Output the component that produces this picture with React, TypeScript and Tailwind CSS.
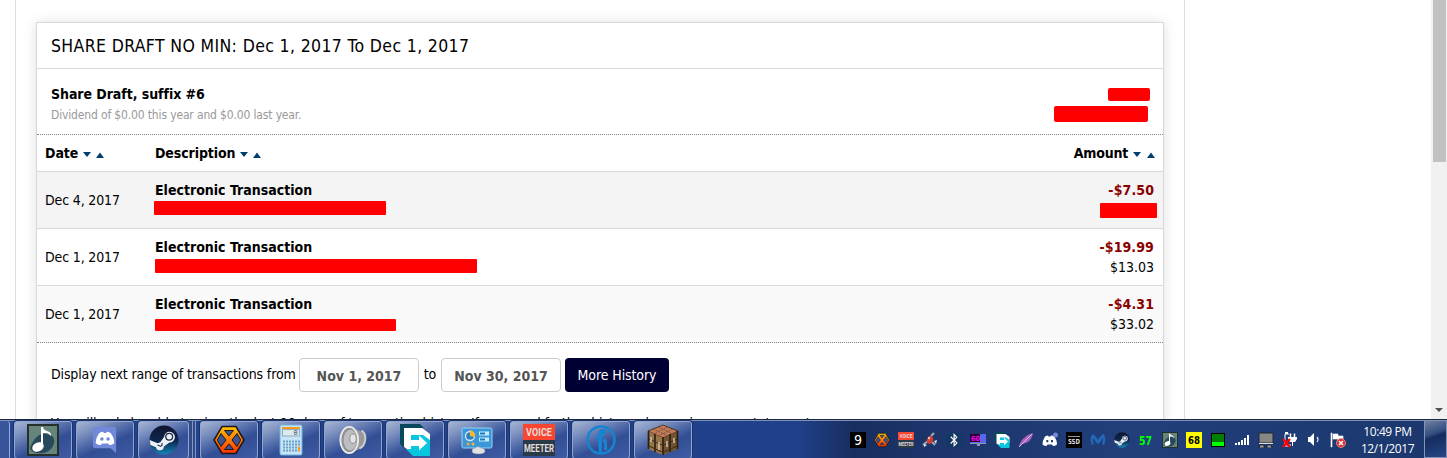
import type { ReactNode } from "react"
import { FaBluetoothB } from "react-icons/fa"

const rows = [
    { date: "Dec 4, 2017", amount: "-$7.50", balance: "", bg: "bg-[#f4f4f4]", bar: "w-[232px] h-[14px] -ml-px mt-px" },
    { date: "Dec 1, 2017", amount: "-$19.99", balance: "$13.03", bg: "bg-white", bar: "w-[322px] h-[14px] mt-[2px]" },
    { date: "Dec 1, 2017", amount: "-$4.31", balance: "$33.02", bg: "bg-[#f9f9f9]", bar: "w-[241px] h-[12px] mt-[5px]" },
]

function SortArrows({ wide }: { wide?: boolean }) {
    return (
        <svg width={wide ? 22 : 21} height="8" viewBox={wide ? "0 0 22 8" : "0 0 21 8"} className="ml-[5px] mt-[3px]">
            <path d="M0 1h8L4 6z" fill="#00406f" />
            <path d={wide ? "M14 7h8l-4-5.5z" : "M13 7h8l-4-5.5z"} fill="#00406f" />
        </svg>
    )
}

function TaskButton({ children }: { children: ReactNode }) {
    return (
        <div className="w-[58px] h-[38px] shrink-0 rounded-[3px] border border-[#93a5cc] shadow-[0_0_0_1px_#1b3472] bg-[linear-gradient(155deg,#a6b5d3_0%,#7f93c1_22%,#4c66a6_46%,#324f96_60%,#3e5ba3_100%)] flex items-center justify-center">
            {children}
        </div>
    )
}

function MusicIcon({ size }: { size: number }) {
    return (
        <svg width={size} height={size} viewBox="0 0 32 32">
            <rect width="32" height="32" fill="#25302b" />
            <rect x="2" y="2" width="28" height="28" fill="#66857a" />
            <path d="M3 24C8 10 16 7 25 12c6 5-1 17-9 17-7 1-12-1-13-5z" fill="#27495b" />
            <ellipse cx="11" cy="23" rx="6" ry="4.5" transform="rotate(-25 11 23)" fill="#fff" />
            <path d="M14 3h2c0 5 9 3 8 9-3-4-6-3-8-3v14h-2z" fill="#fff" />
        </svg>
    )
}

function DiscordIcon() {
    return (
        <svg width="26" height="28" viewBox="0 0 28 30">
            <path d="M4 1h19q3 0 3 3v25l-6-5H4q-3 0-3-3V4q0-3 3-3z" fill="#7289da" />
            <path d="M8 7.5q2-1.200 4-1.300l.7 1.200h2.600l.7-1.200q2 .1 4 1.300 4 5 4 11-2.500 2-5.500 2l-1.200-1.700h-6.600L9.500 20.500q-3 0-5.500-2 0-6 4-11z" fill="#fff" />
            <circle cx="10.700" cy="14" r="1.900" fill="#7289da" />
            <circle cx="17.300" cy="14" r="1.900" fill="#7289da" />
        </svg>
    )
}

function SteamIcon({ size }: { size: number }) {
    return (
        <svg width={size} height={size} viewBox="0 0 30 30">
            <defs>
                <linearGradient id="steam" x1="0" y1="0" x2="0" y2="1">
                    <stop offset="0" stopColor="#10142e" />
                    <stop offset=".55" stopColor="#0c2a50" />
                    <stop offset="1" stopColor="#1686b8" />
                </linearGradient>
            </defs>
            <circle cx="15" cy="15" r="14.5" fill="url(#steam)" />
            <path d="M.6 15l8 3.200q1-.6 2.500-.6l4-5.600a5.400 5.400 0 1 1 5.300 5.600l-5.500 4a4 4 0 0 1-7.900.6L1.500 20z" fill="#eef2f5" />
            <circle cx="20.200" cy="11.800" r="3.400" fill="none" stroke="#17284a" strokeWidth="1.300" />
            <path d="M8.500 20l3 1.200a2 2 0 0 0 1.300-3.200" fill="none" stroke="#17284a" strokeWidth="1.100" />
        </svg>
    )
}

function HexIcon({ size }: { size: number }) {
    return (
        <svg width={size} height={size} viewBox="0 0 32 30">
            <defs>
                <linearGradient id="hex" x1="0" y1="0" x2="0" y2="1">
                    <stop offset="0" stopColor="#ffc400" />
                    <stop offset="1" stopColor="#ff2f00" />
                </linearGradient>
            </defs>
            <path d="M9 1.500h14L31 15l-8 13.500H9L1 15z" fill="url(#hex)" stroke="#1a1720" strokeWidth="1.500" />
            <path d="M11.500 5.500h9L16 11zM11.500 24.500h9L16 19zM8 8.500l5 6.500-5 6.500L4.300 15zM24 8.500L19 15l5 6.500 3.700-6.500z" fill="#3d5493" stroke="#1a1720" />
        </svg>
    )
}

function CalculatorIcon() {
    return (
        <svg width="24" height="32" viewBox="0 0 24 32">
            <rect x="1" y="1" width="22" height="30" rx="1.500" fill="#c5e4f7" stroke="#6fb0de" />
            <rect x="3" y="3" width="18" height="2" fill="#f49a22" />
            <rect x="3.500" y="5.500" width="17" height="6.500" fill="#dceaf0" stroke="#94acba" />
            <text x="14.500" y="11.300" fontSize="7" fontFamily="Liberation Mono" fill="#304050">0</text>
            <path d="M4 17.500h14M4 20.500h14M4 23.500h14M4 26.500h14" stroke="#6f9fc4" strokeWidth="2" strokeDasharray="2 1" />
            <path d="M20 16.500v5" stroke="#6f9fc4" strokeWidth="2" strokeDasharray="2 1" />
            <path d="M20 22.500v5" stroke="#f49a22" strokeWidth="2" />
        </svg>
    )
}

function SpeakerIcon() {
    return (
        <svg width="30" height="32" viewBox="0 0 32 32">
            <path d="M11 2l12 4q6 2 6 10t-7 10l-11 4z" fill="#98999b" />
            <path d="M25 6q5 3 4 10t-6 9" fill="none" stroke="#cfcfcf" strokeWidth="2" />
            <ellipse cx="12" cy="16" rx="9.500" ry="14" fill="#909395" stroke="#ececec" strokeWidth="2" />
            <ellipse cx="13" cy="16" rx="7" ry="11" fill="#bcbec1" />
            <ellipse cx="16" cy="14.500" rx="3.500" ry="5" fill="#e4e4e4" stroke="#85888b" />
        </svg>
    )
}

function ArrowIcon({ size }: { size: number }) {
    return (
        <svg width={size} height={size} viewBox="0 0 32 32">
            <path d="M1 0h20l4 4H6v21l-5-5z" fill="#07485c" />
            <path d="M5 4h18l8 6v12H14v7L5 23z" fill="#fff" />
            <path d="M12 11h12l7 5v16H14l-7-7h5z" fill="#08c6df" />
            <path d="M7 16h13v-4.500l8 7.500-8 7.500V22H7z" fill="#fff" />
        </svg>
    )
}

function PanelIcon() {
    return (
        <svg width="32" height="30" viewBox="0 0 32 30">
            <rect x="1" y="3" width="30" height="20" rx="1.500" fill="#3898d9" stroke="#9bd2f2" />
            <circle cx="9" cy="11" r="4.500" fill="#3080be" stroke="#d5edfa" strokeWidth="1.300" />
            <path d="M9 11V5a6 6 0 0 1 5 7z" fill="#ffb52b" />
            <path d="M18 8.500h10M18 14.500h10" stroke="#c5ecfd" strokeWidth="4" />
            <path d="M19 8.500h5M19 14.500h5" stroke="#2378b7" strokeWidth="2" />
            <circle cx="7" cy="19" r="1.500" fill="#ff9c32" />
            <circle cx="12" cy="19" r="1.500" fill="#ffb52b" />
            <path d="M11 26q0-3 3-3 3-3 6 0 4 0 4 3 0 3-6.500 3T11 26z" fill="#dfe1e4" stroke="#8895a5" strokeWidth=".5" />
        </svg>
    )
}

function VoiceMeeterIcon({ size }: { size: number }) {
    return (
        <svg width={size} height={size} viewBox="0 0 32 32">
            <rect width="32" height="16" fill="#fa4531" />
            <rect y="16" width="32" height="16" fill="#293b49" />
            <g fontFamily="Roboto" fontWeight="700" fontSize="10.500" fill="#e6dcda">
                <text x="3" y="11.500" textLength="26" lengthAdjust="spacingAndGlyphs">VOICE</text>
                <text x="1" y="27.500" textLength="30" lengthAdjust="spacingAndGlyphs">MEETER</text>
            </g>
        </svg>
    )
}

function WrenchIcon() {
    return (
        <svg width="32" height="32" viewBox="0 0 32 32">
            <circle cx="16" cy="16" r="13.500" fill="none" stroke="#1784d0" strokeWidth="2.500" />
            <path d="M13 12V9q1-4 5-4h3v5h-3v3z" fill="#1784d0" />
            <path d="M11 12h7v2h-1v14h-3q-1-7-1-13h-2z" fill="#1784d0" />
            <path d="M18 15h3l1 3v8h-3v-8h-1z" fill="#1784d0" />
        </svg>
    )
}

function CraftingIcon() {
    return (
        <svg width="32" height="32" viewBox="0 0 32 32">
            <path d="M16 1l15 6-15 7L1 7z" fill="#c07c58" stroke="#513521" />
            <path d="M1 7l15 7v17L1 25z" fill="#97754a" />
            <path d="M31 7l-15 7v17l15-6z" fill="#725431" />
            <path d="M6 5l15 7M11 3l15 7M26 5l-15 7M21 3L6 10" stroke="#7c4431" strokeWidth=".8" strokeDasharray="2 1" />
            <path d="M1.500 7v18M8 10v18M16 13v18M23 10v18M30.500 7v18" stroke="#30210f" strokeWidth="1.700" />
            <path d="M2 15l13 6M2 22l13 6M17 21l13-6M17 28l13-6" stroke="#44301b" strokeWidth="1.200" />
            <path d="M4 13v5M12 18v8M20 17v6M27 14v5" stroke="#cec4ad" strokeWidth="1.500" />
        </svg>
    )
}

function Tray() {
    return (
        <div className="flex items-center gap-2 shrink-0 *:w-4 *:h-4 *:shrink-0">
            <svg viewBox="0 0 16 16">
                <rect width="16" height="16" fill="#000" />
                <text x="4" y="13" fontSize="14" fontFamily="DejaVu Sans Condensed" fill="#fff">9</text>
            </svg>
            <HexIcon size={16} />
            <VoiceMeeterIcon size={16} />
            {/* Audio plug */}
            <svg viewBox="0 0 16 16">
                <path d="M1 13l5-4M9 4l3-3M10 10l3 3" stroke="#a3adb8" strokeWidth="2" fill="none" />
                <ellipse cx="8" cy="8" rx="3" ry="4" transform="rotate(20 8 8)" fill="#d63e32" />
                <circle cx="7" cy="6" r="1.200" fill="#f3c0b4" />
                <path d="M2 12l3 1-3 2zM12 9l3-1-1 4z" fill="#e1e5e8" />
            </svg>
            <div className="bg-[#143864] rounded-full flex items-center justify-center">
                <FaBluetoothB size={14} color="#fff" />
            </div>
            <svg viewBox="0 0 16 16">
                <path d="M0 2h16v10H0z" fill="#5868ee" />
                <path d="M0 2h10v8H0z" fill="#27002e" />
                <path d="M0 11h16v1H0zM7 12h3v2H7z" fill="#8e99b7" />
                <text x="1" y="9" fontSize="7" fontWeight="700" fontFamily="DejaVu Sans Condensed" fill="#f0f" textLength="9" lengthAdjust="spacingAndGlyphs">60</text>
            </svg>
            <ArrowIcon size={16} />
            <svg viewBox="0 0 16 16">
                <path d="M1 15C2 8 8 3 15 1c-1 6-4 10-11 11z" fill="#a664bd" />
                <path d="M1 15L14 2" stroke="#e0b7e9" />
            </svg>
            <svg viewBox="0 0 16 16">
                <path d="M3 4.500q2-1 3-1l.5 1h2l.5-1q2 0 3.500 1 2.500 4 2.500 8-2 1.500-4 1.500l-1-1.500H5.500l-1 1.500q-2 0-4-1.500 0-4 2.500-8z" fill="#fff" />
                <path d="M5.300 8v2.200M10 8v2.200" stroke="#243d77" strokeWidth="2" />
                <circle cx="13.500" cy="3" r="2.500" fill="#7289da" />
            </svg>
            <svg viewBox="0 0 16 16">
                <rect width="16" height="16" fill="#000" />
                <path d="M2 4.500h12" stroke="#999" />
                <text x="2" y="12" fontSize="7" fontWeight="700" fontFamily="DejaVu Sans Condensed" fill="#ddd" textLength="12" lengthAdjust="spacingAndGlyphs">SSD</text>
            </svg>
            <svg viewBox="0 0 16 16">
                <path d="M2 13Q-1 7 2.500 2q2.500 1 5.500 6 3-5 5.500-6 3.500 5 .5 11l-2-1q1.500-3 .5-6Q10 11 8 12 6 11 3.500 6q-1 3 .5 6z" fill="#2468b8" />
            </svg>
            <SteamIcon size={16} />
            <svg viewBox="0 0 16 16">
                <text x="1" y="13" fontSize="12" fontWeight="700" fontFamily="DejaVu Sans Condensed" fill="#0f0" textLength="13" lengthAdjust="spacingAndGlyphs">57</text>
            </svg>
            <MusicIcon size={16} />
            <svg viewBox="0 0 16 16">
                <rect width="16" height="16" fill="#ff0" />
                <text x="2" y="12" fontSize="10" fontWeight="700" fontFamily="DejaVu Sans Condensed" textLength="12" lengthAdjust="spacingAndGlyphs">68</text>
            </svg>
            <svg viewBox="0 0 16 16">
                <rect x="1" y="1" width="14" height="14" fill="#000" />
                <rect x="2" y="2" width="12" height="8" fill="#008000" />
                <rect x="2" y="10" width="12" height="4" fill="#0f0" />
            </svg>
            <svg viewBox="0 0 16 16">
                <path d="M1 13v-2h2v2zM4 13v-3h2v3zM7 13V8h2v5zM10 13V6h2v7zM13 13V3h2v10z" fill="#fff" />
            </svg>
            <svg viewBox="0 0 16 16">
                <rect x="1" y="1" width="14" height="10" fill="#878787" stroke="#24272c" />
                <path d="M1 11.500h14" stroke="#ddd" />
                <path d="M2 13h4v3H1zM9 13h4l1 3H9z" fill="#999" stroke="#111" strokeWidth=".7" />
            </svg>
            {/* Battery with the charging plug */}
            <svg viewBox="0 0 16 16">
                <path d="M7 2H3v12h5v-2" fill="none" stroke="#fff" />
                <path d="M3 0h3v2H3z" fill="#fff" />
                <path d="M8.500 1.500v4M12.500 1.500v4" stroke="#fff" strokeWidth="1.500" />
                <path d="M6 5h9v2l-2 3h-2v4h-1v-4H8L6 7z" fill="#fff" />
                <path d="M1 7l7 8M8 7l-7 8" stroke="#f00" strokeWidth="2.200" />
            </svg>
            <svg viewBox="0 0 16 16">
                <path d="M2 5h2l4-4v13l-4-4H2z" fill="#fff" />
                <path d="M11 5q2 2.500 0 5" fill="none" stroke="#d5dceb" strokeWidth="1.300" />
            </svg>
            <svg viewBox="0 0 16 16">
                <path d="M1 1h1v14H1zM3 2h5v2h5v5H8V7H3z" fill="#fff" stroke="#fff" strokeWidth=".6" />
                <circle cx="11" cy="11" r="4.500" fill="#d93131" stroke="#f0a6a3" strokeWidth=".7" />
                <path d="M9 9l4 4M13 9l-4 4" stroke="#fff" strokeWidth="1.500" />
            </svg>
        </div>
    )
}

function Taskbar() {
    return (
        <footer className="h-[39px] shrink-0 border-t border-[#1c2740] bg-[linear-gradient(90deg,#22458f_0%,#20408a_55%,#182e60_59%,#1c356b_65%,#223f7c_78%,#1b376d_100%)] flex overflow-hidden">
            <div className="flex-1 flex items-center border-t border-[#7e93b6]">
                <div className="w-[10px] h-[38px] shrink-0 border-r border-[#9aabcf] rounded-r-[3px] bg-[#38549b]" />
                <div className="flex gap-1 ml-1 shrink-0">
                    <TaskButton><MusicIcon size={32} /></TaskButton>
                    <TaskButton><DiscordIcon /></TaskButton>
                    <div className="flex">
                        <div className="w-[51px] h-[38px] rounded-[3px] border border-[#93a5cc] shadow-[0_0_0_1px_#1b3472] bg-[linear-gradient(155deg,#a6b5d3_0%,#7f93c1_22%,#4c66a6_46%,#324f96_60%,#3e5ba3_100%)] flex items-center justify-center">
                            <SteamIcon size={30} />
                        </div>
                        {/* Edges of the grouped windows */}
                        <div className="w-1 border-r border-[#8196c4] bg-[#304b88]" />
                        <div className="w-[3px] border-r border-[#8196c4] bg-[#304b88]" />
                    </div>
                </div>
                <div className="flex gap-1 ml-1 shrink-0">
                    <TaskButton><HexIcon size={32} /></TaskButton>
                    <TaskButton><CalculatorIcon /></TaskButton>
                    <TaskButton><SpeakerIcon /></TaskButton>
                    <TaskButton><ArrowIcon size={32} /></TaskButton>
                    <TaskButton><PanelIcon /></TaskButton>
                    <TaskButton><VoiceMeeterIcon size={32} /></TaskButton>
                    <TaskButton><WrenchIcon /></TaskButton>
                    <TaskButton><CraftingIcon /></TaskButton>
                </div>
                <div className="flex-1" />
                <Tray />
                <div className="w-[78px] shrink-0 pl-[5px] pt-px text-center font-['Open_Sans'] text-[12px] tracking-[-0.4px] leading-[17px] text-white">
                    <div>10:49 PM</div>
                    <div>12/1/2017</div>
                </div>
            </div>
            <div className="w-[23px] border border-[#8295b7] bg-[linear-gradient(160deg,#71809f_0%,#344f82_35%,#142c60_45%,#274785_100%)]" />
        </footer>
    )
}

export default function App() {
    return (
        <div className="h-[458px] w-[1447px] flex flex-col overflow-hidden bg-white font-['DejaVu_Sans_Condensed','DejaVu_Sans',sans-serif] text-[14px] leading-5 text-black">
            <div className="h-[419px] flex justify-between overflow-hidden">
                <main className="ml-[15px] w-[1170px] border-x border-[#ddd] px-5 pt-[22px]">
                    <section className="h-[500px] border border-[#d9d9d9] shadow-[0_0_12px_rgba(0,0,0,0.12)]">
                        <h1 className="h-[46px] px-[14px] border-b border-[#d9d9d9] text-[17.5px] leading-[46px] tracking-[0.36px] whitespace-nowrap">
                            SHARE DRAFT NO MIN: Dec 1, 2017 To Dec 1, 2017
                        </h1>

                        <div className="h-[66px] px-[14px] pt-[15px] flex justify-between border-b border-dotted border-[#888]">
                            <div>
                                <div className="font-bold tracking-[-0.06px]">Share Draft, suffix #6</div>
                                <div className="pt-px text-[12px] text-[#999] tracking-[-0.15px]">Dividend of $0.00 this year and $0.00 last year.</div>
                            </div>
                            <div className="flex flex-col items-end pt-1">
                                <div className="w-[42px] h-[13px] bg-[#f00] rounded-[2px] mr-[-1px]" />
                                <div className="w-[94px] h-4 bg-[#f00] rounded-[2px] mt-[5px] mr-px" />
                            </div>
                        </div>

                        <div className="h-[37px] pl-2 pr-2 flex items-center font-bold border-b border-[#d9d9d9]">
                            <div className="w-[110px] flex items-center"><span className="tracking-[-0.05px]">Date</span><SortArrows /></div>
                            <div className="flex-1 flex items-center"><span className="tracking-[-0.1px]">Description</span><SortArrows /></div>
                            <div className="flex items-center"><span className="tracking-[-0.2px]">Amount</span><SortArrows wide /></div>
                        </div>

                        {rows.map((row, i) => (
                            <div key={i} className={`h-[57px] pl-2 pr-[9px] flex border-b ${i === 2 ? "border-dotted border-[#888]" : "border-[#d9d9d9]"} ${row.bg}`}>
                                <div className="w-[110px] self-center tracking-[-0.15px]">{row.date}</div>
                                <div className="flex-1 pt-[8px]">
                                    <div className="font-bold">Electronic Transaction</div>
                                    <div className={`bg-[#f00] rounded-[1px] ${row.bar}`} />
                                </div>
                                <div className="pt-[8px] flex flex-col items-end">
                                    <div className="font-bold text-[#8b0000] tracking-[0.1px]">{row.amount}</div>
                                    {row.balance ? <div>{row.balance}</div> : <div className="w-[57px] h-[15px] bg-[#f00] rounded-[1px] mt-[3px] -mr-[3px]" />}
                                </div>
                            </div>
                        ))}

                        <div className="px-[14px] pt-[15px] flex">
                            <span className="w-[248px] leading-[32px] tracking-[-0.14px] whitespace-nowrap">Display next range of transactions from</span>
                            <div className="w-[120px] h-[34px] border border-[#ccc] rounded-[4px] text-center font-bold text-[#555] leading-[34px]">Nov 1, 2017</div>
                            <span className="w-[22px] text-center leading-[32px]">to</span>
                            <div className="w-[120px] h-[34px] border border-[#ccc] rounded-[4px] text-center font-bold text-[#555] leading-[34px]">Nov 30, 2017</div>
                            <button className="ml-1 w-[104px] h-[34px] rounded-[4px] bg-[#000033] text-white tracking-[-0.1px] whitespace-nowrap">More History</button>
                        </div>
                        <p className="px-[14px] mt-[21px] tracking-[-0.1px] whitespace-nowrap">
                            You will only be able to view the last 90 days of transaction history. If you need further history please view your statements.
                        </p>
                    </section>
                </main>

                {/* Scrollbar */}
                <aside className="w-4 bg-[#f1f1f1] flex flex-col items-center justify-between">
                    <div className="w-[13px] h-[162px] bg-[#c1c1c1]" />
                    <svg width="8" height="5" className="mb-[6px]"><path d="M0 0h8L4 4z" fill="#505050" /></svg>
                </aside>
            </div>
            <Taskbar />
        </div>
    )
}
